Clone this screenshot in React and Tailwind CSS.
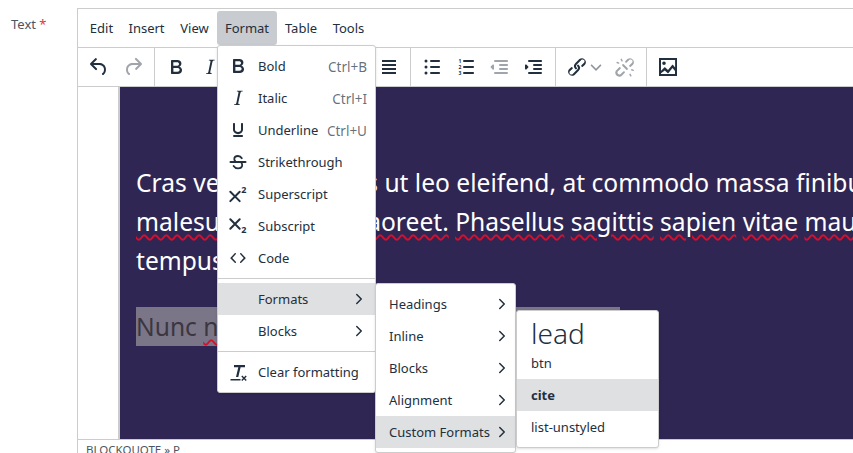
import { ChevronRight } from "lucide-react";

const font = { fontFamily: '"Noto Sans", "Open Sans", sans-serif' };

const paths = {
  undo: "M6.4 8H12c3.7 0 6.2 2 6.8 5.1.6 2.7-.4 5.6-2.3 6.8a1 1 0 0 1-1-1.8c1.1-.6 1.8-2.7 1.4-4.6-.5-2.1-2.1-3.5-4.9-3.5H6.4l3.3 3.3a1 1 0 1 1-1.4 1.4l-5-5a1 1 0 0 1 0-1.4l5-5a1 1 0 0 1 1.4 1.4L6.4 8z",
  redo: "M17.6 10H12c-2.8 0-4.4 1.4-4.9 3.5-.4 2 .3 4 1.4 4.6a1 1 0 1 1-1 1.8c-2-1.2-2.9-4.1-2.3-6.8.6-3 3-5.1 6.8-5.1h5.6l-3.3-3.3a1 1 0 1 1 1.4-1.4l5 5a1 1 0 0 1 0 1.4l-5 5a1 1 0 0 1-1.4-1.4l3.3-3.3z",
  bold: "M7.8 19c-.3 0-.5 0-.6-.2l-.2-.5V5.7c0-.2 0-.4.2-.5l.6-.2h5c1.5 0 2.7.3 3.5 1 .7.6 1.1 1.4 1.1 2.5a3 3 0 0 1-.6 1.9c-.4.6-1 1-1.6 1.2.4.1.9.3 1.3.6s.8.7 1 1.2c.4.4.5 1 .5 1.6 0 1.3-.4 2.3-1.3 3-.8.7-2.1 1-3.8 1H7.8zm5-8.3c.6 0 1.2-.1 1.6-.5.4-.3.6-.7.6-1.3 0-1.1-.8-1.7-2.3-1.7H9.3v3.5h3.4zm.5 6c.7 0 1.3-.1 1.7-.4.4-.4.6-.9.6-1.5s-.2-1-.7-1.4c-.4-.3-1-.4-2-.4H9.4v3.8h4z",
  italic: "M16.7 4.7l-.1.9h-.3c-.6 0-1 0-1.4.3-.3.3-.4.6-.5 1.1l-2.1 9.8v.6c0 .5.4.8 1.4.8h.2l-.2.8H8l.2-.8h.2c1.1 0 1.8-.5 2-1.5l2-9.8.1-.5c0-.6-.4-.8-1.4-.8h-.3l.2-.9h5.8z",
  underline: "M16 5c.6 0 1 .4 1 1v5.5a4 4 0 0 1-.4 1.8l-1 1.4a5.3 5.3 0 0 1-5.5 1 5 5 0 0 1-1.6-1c-.5-.4-.8-.9-1.1-1.4a4 4 0 0 1-.4-1.8V6c0-.6.4-1 1-1s1 .4 1 1v5.5c0 .3 0 .6.2 1l.6.7a3.3 3.3 0 0 0 2.2.8 3.4 3.4 0 0 0 2.2-.8c.3-.2.4-.5.6-.8l.2-.9V6c0-.6.4-1 1-1zM8 17h8c.6 0 1 .4 1 1s-.4 1-1 1H8a1 1 0 0 1 0-2z",
  strike: "M4.500 11h15a1 1 0 0 1 0 2h-15a1 1 0 0 1 0-2z",
  code: "M9.800 15.700c.3.300.3.800 0 1-.3.400-.800.400-1 0l-4.300-4.100c-.2-.2-.2-.6 0-.800l4.200-4.500c.3-.300.800-.300 1 0 .4.300.4.800 0 1L6.300 12l3.500 3.700zM14.200 15.700c-.3.300-.3.800 0 1 .3.400.800.400 1 0l4.300-4.100c.2-.2.2-.6 0-.800l-4.200-4.500c-.3-.300-.800-.300-1 0-.4.300-.4.800 0 1l3.400 3.700-3.500 3.700z",
  clear: "M8 5h11v2.200h-4.400L12.300 17h-2.300l2.300-9.800H8zM4.500 19h10v1.600h-10zM16.300 15.500l1.700 1.700 1.700-1.700 1 1-1.700 1.700 1.700 1.700-1 1-1.700-1.700-1.700 1.700-1-1 1.700-1.700-1.700-1.700z",
  alignLeft: "M5 5h14v2H5zM5 9h8v2H5zM5 13h14v2H5zM5 17h8v2H5z",
  alignCenter: "M5 5h14v2H5zM8 9h8v2H8zM5 13h14v2H5zM8 17h8v2H8z",
  alignRight: "M5 5h14v2H5zM11 9h8v2h-8zM5 13h14v2H5zM11 17h8v2h-8z",
  justify: "M5 5h14v2H5zM5 9h14v2H5zM5 13h14v2H5zM5 17h14v2H5z",
  bullets: "M11 5h8c.6 0 1 .4 1 1s-.4 1-1 1h-8a1 1 0 0 1 0-2zm0 6h8c.6 0 1 .4 1 1s-.4 1-1 1h-8a1 1 0 0 1 0-2zm0 6h8c.6 0 1 .4 1 1s-.4 1-1 1h-8a1 1 0 0 1 0-2zM4.500 6a1.500 1.500 0 1 1 3 0 1.500 1.500 0 0 1-3 0zm0 6a1.500 1.500 0 1 1 3 0 1.500 1.500 0 0 1-3 0zm0 6a1.500 1.500 0 1 1 3 0 1.500 1.500 0 0 1-3 0z",
  numbers: "M10 5h9c.6 0 1 .4 1 1s-.4 1-1 1h-9a1 1 0 0 1 0-2zm0 6h9c.6 0 1 .4 1 1s-.4 1-1 1h-9a1 1 0 0 1 0-2zm0 6h9c.6 0 1 .4 1 1s-.4 1-1 1h-9a1 1 0 0 1 0-2z",
  outdent: "M7 5h12c.6 0 1 .4 1 1s-.4 1-1 1H7a1 1 0 1 1 0-2zm5 4h7c.6 0 1 .4 1 1s-.4 1-1 1h-7a1 1 0 0 1 0-2zm0 4h7c.6 0 1 .4 1 1s-.4 1-1 1h-7a1 1 0 0 1 0-2zm-5 4h12a1 1 0 0 1 0 2H7a1 1 0 0 1 0-2zm-2.600-2.800L2.800 12.600a.8.8 0 0 1 0-1.200l1.600-1.600c.3-.3 1.600-.8 1.600.7v3.300c0 1.500-1.300 1.100-1.600.400z",
  indent: "M7 5h12c.6 0 1 .4 1 1s-.4 1-1 1H7a1 1 0 1 1 0-2zm5 4h7c.6 0 1 .4 1 1s-.4 1-1 1h-7a1 1 0 0 1 0-2zm0 4h7c.6 0 1 .4 1 1s-.4 1-1 1h-7a1 1 0 0 1 0-2zm-5 4h12a1 1 0 0 1 0 2H7a1 1 0 0 1 0-2zM4.600 9.800l1.600 1.600a.8.8 0 0 1 0 1.200l-1.600 1.600c-.3.300-1.600.800-1.600-.700v-3c0-1.500 1.300-1.100 1.600-.700z",
  link: "M6.200 12.300a1 1 0 0 1 1.400 1.400l-2.100 2.100a2 2 0 1 0 2.700 2.700l4.200-4.200a2 2 0 0 0 0-2.800 1 1 0 1 1 1.400-1.400 4 4 0 0 1 0 5.600l-4.200 4.200a4 4 0 0 1-5.600-5.600l2.200-2zm11.600-.6a1 1 0 0 1-1.400-1.400l2.100-2.100a2 2 0 1 0-2.700-2.700l-4.200 4.200a2 2 0 0 0 0 2.800 1 1 0 1 1-1.400 1.400 4 4 0 0 1 0-5.600l4.200-4.200a4 4 0 0 1 5.600 5.600l-2.200 2z",
  unlink: "M6.200 12.300a1 1 0 0 1 1.400 1.400l-2 2a2 2 0 1 0 2.600 2.800l2.100-2.100a1 1 0 0 1 1.400 1.400l-2.100 2.100a4 4 0 1 1-5.600-5.500l2.200-2.100zm11.600-.6a1 1 0 0 1-1.400-1.400l2.100-2.100a2 2 0 1 0-2.700-2.700l-2.100 2.100a1 1 0 0 1-1.400-1.400l2.100-2.100a4 4 0 0 1 5.600 5.600l-2.200 2zM9.300 10.700a1 1 0 0 1 1.400-1.400l4 4a1 1 0 0 1-1.400 1.400zM7.500 4.500a.8.8 0 0 1 1.400-.6l.9 1.800a.8.8 0 0 1-1.400.6zM3.700 8.200a.8.8 0 0 1 .6-1.400l1.800.6a.8.8 0 0 1-.5 1.400zM16.300 19.500a.8.8 0 0 1 1.400-.6l.8 1.700a.8.8 0 0 1-1.400.6zM18.300 15.500a.8.8 0 0 1 .5-1.400l1.800.6a.8.8 0 0 1-.5 1.400z",
  image: "M3 3h18v18H3zm2 2v10.700l3.300-3.200c.3-.3.700-.3 1 0l2.700 2.500 4.100-5c.3-.4.800-.4 1 0l2 2.600V5zm0 14h14v-2.900l-2.500-3.200-4 5c-.3.300-.7.400-1 .100l-2.700-2.600L5 18.200zM8 6.500a1.800 1.800 0 1 1 0 3.600 1.800 1.800 0 0 1 0-3.600z",
};

function Icon({ name, className = "text-[#222f3e]" }) {
  return (
    <svg viewBox="0 0 24 24" width="24" height="24" fill="currentColor" fillRule="evenodd" className={`block shrink-0 ${className}`}>
      {paths[name] && <path d={paths[name]} />}
      {name === "strike" && (
        <path
          d="M15.800 8.200C15 6.800 13.800 6 12 6c-2.200 0-3.700 1.200-3.700 3 0 .8.3 1.500.8 2M15.500 13c.5.6.7 1.200.7 2 0 2-1.700 3.300-4.200 3.300-2 0-3.500-.9-4.400-2.300"
          fill="none"
          stroke="currentColor"
          strokeWidth="1.800"
          strokeLinecap="round"
        />
      )}
      {name === "superscript" && (
        <>
          <path d="M4.300 9.700l9.400 9.400M13.700 9.700l-9.400 9.400" fill="none" stroke="currentColor" strokeWidth="2" strokeLinecap="round" />
          <text x="15.200" y="11.300" fontSize="9" fontWeight="700" fontFamily="Noto Sans">2</text>
        </>
      )}
      {name === "subscript" && (
        <>
          <path d="M4.300 5.300l9.400 9.400M13.700 5.300l-9.400 9.400" fill="none" stroke="currentColor" strokeWidth="2" strokeLinecap="round" />
          <text x="15.200" y="19.300" fontSize="9" fontWeight="700" fontFamily="Noto Sans">2</text>
        </>
      )}
      {name === "numbers" &&
        ["1", "2", "3"].map((n, i) => (
          <text key={n} x="4.500" y={8 + i * 6} fontSize="5" fontWeight="700" fontFamily="Noto Sans">{n}</text>
        ))}
    </svg>
  );
}

function ToolButton({ name, disabled }) {
  return (
    <div className="flex h-[34px] w-[34px] items-center justify-center">
      <Icon name={name} className={disabled ? "text-[#a0a5ab]" : "text-[#222f3e]"} />
    </div>
  );
}

const menus = [
  { label: "Edit", width: "w-[39px]" },
  { label: "Insert", width: "w-[51px]" },
  { label: "View", width: "w-[45px]" },
  { label: "Format", width: "w-[60px] bg-[#c8cbcf]" },
  { label: "Table", width: "w-[48px]" },
  { label: "Tools", width: "w-[47px]" },
];

const toolbar = [
  [{ name: "undo" }, { name: "redo", disabled: true }],
  [{ name: "bold" }, { name: "italic" }, { name: "underline" }],
  [{ name: "alignLeft" }, { name: "alignCenter" }, { name: "alignRight" }, { name: "justify" }],
  [{ name: "bullets" }, { name: "numbers" }, { name: "outdent", disabled: true }, { name: "indent" }],
];

const formatItems = [
  { icon: "bold", label: "Bold", key: "Ctrl+B" },
  { icon: "italic", label: "Italic", key: "Ctrl+I" },
  { icon: "underline", label: "Underline", key: "Ctrl+U" },
  { icon: "strike", label: "Strikethrough" },
  { icon: "superscript", label: "Superscript" },
  { icon: "subscript", label: "Subscript" },
  { icon: "code", label: "Code" },
];

const wavy = "underline decoration-wavy decoration-[#d80f2c] decoration-[1.500px] underline-offset-[3px]";

function Squiggle({ words }) {
  return words.map((w, i) => (
    <span key={w}>
      <span className={wavy}>{w}</span>
      {i < words.length - 1 ? " " : ""}
    </span>
  ));
}

function MenuRow({ icon, label, shortcut, active, sub }) {
  return (
    <div className={`flex h-8 items-center pr-2 pl-2 ${active ? "bg-[#dee0e2]" : ""}`}>
      <div className="mr-2 w-6 shrink-0">{icon && <Icon name={icon} />}</div>
      <span className="flex-1 pt-[2px] whitespace-nowrap">{label}</span>
      {shortcut && <span className="pt-[2px] text-[13.500px] text-[#222f3e]/70">{shortcut}</span>}
      {sub && <ChevronRight size={18} strokeWidth={2} className="-mr-[1px] text-[#222f3e]" />}
    </div>
  );
}

function SubRow({ label, active }) {
  return (
    <div className={`flex h-8 items-center justify-between pr-1 pl-[13px] ${active ? "bg-[#dee0e2]" : ""}`}>
      <span className="pt-[2px] whitespace-nowrap">{label}</span>
      <ChevronRight size={18} strokeWidth={2} className="text-[#222f3e]" />
    </div>
  );
}

export default function App() {
  return (
    <div className="relative flex h-[453px] w-[853px] overflow-hidden bg-white text-[13px] text-[#222f3e]" style={font}>
      <div className="w-[77px] shrink-0 pt-[15px] pl-[11px] text-[#4b5563]">
        Text <span className="text-[#dc3545]">*</span>
      </div>

      <div className="mt-2 flex h-[500px] w-[820px] shrink-0 flex-col border border-[#ccc]">
        <div className="flex h-[38px] shrink-0 items-start px-1 pt-[2px]">
          {menus.map((m) => (
            <div key={m.label} className={`flex h-[34px] items-center justify-center rounded-[3px] pt-[2px] ${m.width}`}>
              {m.label}
            </div>
          ))}
        </div>

        <div className="flex h-[40px] shrink-0 border-y border-[#ccc]">
          {toolbar.map((group, i) => (
            <div key={i} className="flex items-center border-r border-[#ccc] px-1">
              {group.map((b) => (
                <ToolButton key={b.name} {...b} />
              ))}
            </div>
          ))}
          <div className="flex items-center border-r border-[#ccc] px-1">
            <ToolButton name="link" />
            <svg viewBox="0 0 10 10" width="14" height="14" fill="none" stroke="#222f3e" strokeWidth="1.100" className="-ml-[5px] mr-[5px] opacity-50">
              <path d="M1.500 3.500 5 7l3.500-3.500" />
            </svg>
            <ToolButton name="unlink" disabled />
          </div>
          <div className="flex items-center px-1">
            <ToolButton name="image" />
          </div>
        </div>

        <div className="flex h-[352px] shrink-0 overflow-hidden pl-[40px]">
          <div className="flex-1 overflow-hidden border-l-2 border-[#ccc] bg-[#2f2654] pt-[76px] pl-4 text-[24.600px] leading-[39px] whitespace-nowrap text-white">
            <p>Cras vestibulum eros ut leo eleifend, at commodo massa finibus nec.</p>
            <p>
              <Squiggle words={["malesuada", "nibh", "sit", "laoreet."]} />{" "}
              <Squiggle words={["Phasellus", "sagittis", "sapien", "vitae", "mauris"]} />
            </p>
            <p>tempus.</p>
            <p className="mt-[27px] w-[484px] overflow-hidden bg-[#7a7687] text-[#3b3640]">
              Nunc <span className={wavy}>nec</span> dolor sit amet
            </p>
          </div>
        </div>

        <div className="h-[20px] shrink-0 border-t border-[#ccc] pl-2 text-[11.500px] leading-[19px] text-[#4b5563]">
          BLOCKQUOTE » P
        </div>
      </div>

      <div className="absolute top-[45px] left-[217px] w-[159px] rounded-[3px] border border-[#ccc] bg-white py-1 shadow-sm">
        {formatItems.map((it) => (
          <MenuRow key={it.label} icon={it.icon} label={it.label} shortcut={it.key} />
        ))}
        <div className="my-1 border-t border-[#ccc]" />
        <MenuRow label="Formats" active sub />
        <MenuRow label="Blocks" sub />
        <div className="my-1 border-t border-[#ccc]" />
        <MenuRow icon="clear" label="Clear formatting" />
      </div>

      <div className="absolute top-[283px] left-[375px] w-[141px] rounded-[3px] border border-[#ccc] bg-white py-1 shadow-sm">
        <SubRow label="Headings" />
        <SubRow label="Inline" />
        <SubRow label="Blocks" />
        <SubRow label="Alignment" />
        <SubRow label="Custom Formats" active />
      </div>

      <div className="absolute top-[310px] left-[516px] w-[143px] rounded-[3px] border border-[#ccc] bg-white py-1 shadow-sm">
        <div className="flex h-8 items-center pt-[3px] pl-[14px] text-[28px] font-light">lead</div>
        <div className="flex h-8 items-center pt-[2px] pl-[14px]">btn</div>
        <div className="flex h-8 items-center bg-[#dee0e2] pt-[2px] pl-[14px] font-bold">cite</div>
        <div className="flex h-8 items-center pt-[2px] pl-[14px]">list-unstyled</div>
      </div>
    </div>
  );
}
